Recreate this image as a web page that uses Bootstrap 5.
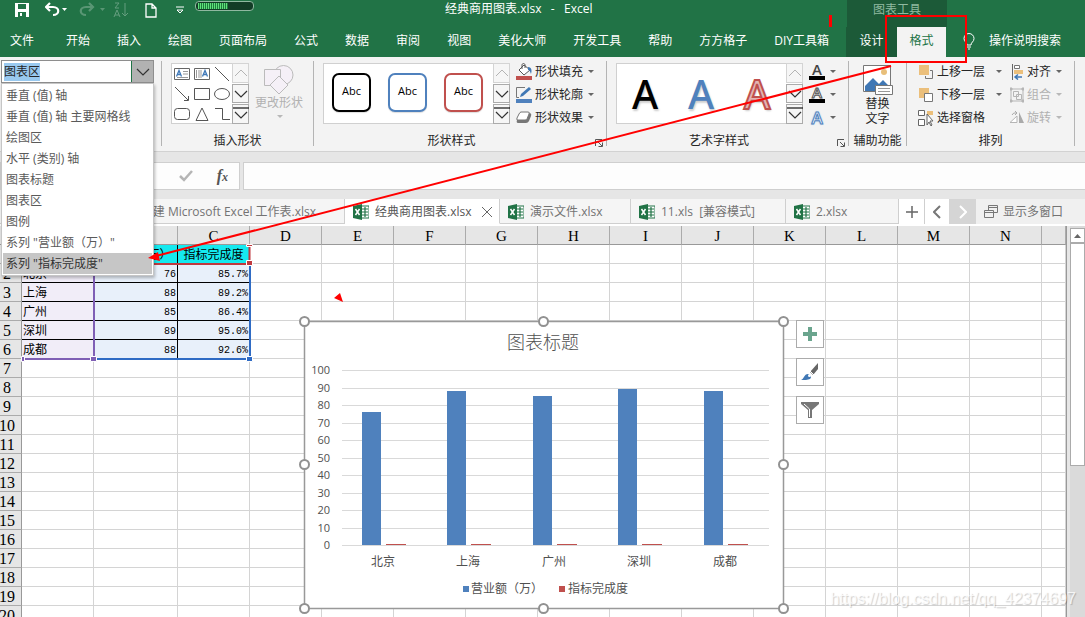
<!DOCTYPE html>
<html lang="zh-CN">
<head>
<meta charset="utf-8">
<meta name="viewport" content="width=device-width, initial-scale=1">
<title>经典商用图表.xlsx - Excel</title>
<link href="https://cdn.jsdelivr.net/npm/bootstrap@5.3.0/dist/css/bootstrap.min.css" rel="stylesheet">
<style>
body{font:12px/16px "Open Sans","Noto Sans CJK SC",sans-serif;color:#262626;background:#e6e6e6}
button,input,.btn{font:inherit;color:inherit}
button{border:0;background:none;padding:0;white-space:nowrap}
svg{display:block;flex:none}
.app-shell{height:100vh}
/* header */
.app-head{background:#217346;color:#fff}
.title-row{height:27px}
.quick{flex:0 0 445px;height:20px;padding-left:15px}
.doc-title{flex:0 0 402px;height:18px;padding-top:1px}
.ctx-title{flex:0 0 100px;background:#1c5a38;color:#90b9a0;height:27px;padding-top:2px}
.meter{width:59px;height:10px;border:1px solid #8fb8a0;border-radius:4px;background:#123c26;padding:1px 2px}
.meter span{display:block;width:30px;height:6px;background:repeating-linear-gradient(90deg,#5fe07a 0 1px,#1d7a3c 1px 2px)}
.tab-row{height:30px;padding-left:10px}
.tab-row button{height:30px;padding-bottom:2px}
.main-tabs{gap:27px}
.file-tab{margin-right:5px}
.ctx-tabs{margin-left:17px;width:100px;background:#1c5a38}
.ctx-tabs button{flex:1 1 0}
.ctx-tabs .current{flex:0 0 49px;background:#f3f3f3;color:#217346}
.tell{gap:14px;margin-left:17px}
/* ribbon */
.ribbon{background:#f3f3f3;height:95px;padding:4px 0 5px;border-bottom:1px solid #d2d2d2}
.rgroup{border-right:1px solid #b4b4b4;position:relative;flex:none}
.rbody{height:69px}
.rlabel{height:17px;line-height:17px;text-align:center;padding-top:2px}
.launcher{position:absolute;right:3px;bottom:-1px}
.g-elements{width:162px}.g-insert{width:152px;padding-left:9px}.g-styles{width:293px;padding-left:9px}.g-art{width:242px;padding-left:9px}.g-alt{width:58px}.g-arrange{width:168px;padding-left:11px}
.g-insert .rlabel,.g-styles .rlabel,.g-art .rlabel{margin-left:-9px}
.g-styles .rlabel,.g-art .rlabel{padding-right:17px}
.g-arrange .rlabel{margin-left:-11px}
.combo{margin-left:1px;width:153px;height:23px;border:1px solid #8e8e8e;background:#fff;margin-top:-1px}
.combo input{width:130px;border:0;border-right:1px solid #217346;padding:0 2px;outline:0;background:linear-gradient(#99c9ef,#99c9ef) 2px center/36px 18px no-repeat #fff}
.combo button{flex:1;background:#b2b2b2}
.combo svg{margin:auto}
.pick{position:absolute;left:1px;top:22px;width:153px;z-index:20;background:#fff;border:1px solid #c6c6c6;padding:1px;box-shadow:1px 2px 3px #0004}
.pick button{display:block;width:100%;height:21px;text-align:left;padding-left:3px;color:#5a5a5a}
.pick .chosen{background:#c6c6c6;color:#333}
.gallery{height:61px;border:1px solid #d0d0d0;background:#fff;margin-top:2px}
.shape-grid{display:grid;grid-template-columns:repeat(3,20px);grid-template-rows:repeat(3,20px);width:61px}
.shape-grid button{display:grid;place-items:center}
.gscroll{width:17px;margin:-1px}
.gscroll button{flex:1;border:1px solid #ababab;background:#f6f6f6;display:grid;place-items:center;margin-bottom:1px}
.gscroll button:first-child{border-color:#d4d4d4}
.gscroll button:last-child{margin-bottom:0}
.abc-list{width:170px;gap:17px;padding:9px 8px}
.abc-list button{width:39px;height:39px;border:2px solid #000;border-radius:7px;font-size:11px;color:#000;background:#fff;padding-bottom:3px;box-shadow:0 1px 1px #0002}
.abc-list .blue{border-color:#4f81bd}.abc-list .red{border-color:#c0504d}
.art-list{width:170px;padding-right:2px}
.art-list button{flex:1;font:500 40px/58px "Noto Sans","Open Sans",sans-serif;color:#000;text-shadow:1px 2px 2px #0003}
.art-list .blue{color:#4f81bd}
.art-list .red{color:#e3b4b3;-webkit-text-stroke:2px #c0504d}
.stack button{height:23px;display:flex;align-items:center;gap:3px}
.stack{margin-top:-1px}
.beside{margin-left:6px}
.caret{width:0;height:0;border:3px solid transparent;border-top-color:#666;border-bottom:0;margin-left:2px}
.off{color:#b1b1b1}.off .caret{border-top-color:#b8b8b8}
.gly{width:16px;height:17px;border-bottom:4px solid #000;line-height:13px;font-weight:600;font-size:15px;text-align:center;color:#444}
.gly.hollow{color:#fff;-webkit-text-stroke:1px #555}
.gly.glow{border-color:transparent;color:#fff;font-size:17px;line-height:17px;-webkit-text-stroke:1px #4f81bd;text-shadow:0 0 2px #4f9be0}
/* formula row */
.formula{padding:10px 0 9px;gap:3px}
.fx-tools{width:240px;height:28px;background:#fdfdfd;border:1px solid #cfcfcf;padding:0 11px 0 178px}
.fx-mark{font:italic 700 12px/18px "Liberation Serif",serif;color:#555}
.fx-mark span{font-size:16px}
.fx-input{height:28px;background:#fdfdfd;border:1px solid #cfcfcf;border-right:0;min-width:0;padding:0 6px}
/* workbook tabs */
.books{height:27px;border-bottom:2px solid #fff;color:#737373;background:#f0f0f0;flex:none}
.book{border-right:1px solid #cfcfcf;border-bottom:1px solid #cfcfcf;background:#f5f5f5;display:flex;align-items:center;gap:6px;padding-left:8px;padding-top:1px;flex:none}
.book.current{background:#fff;border-bottom-color:#fff;color:#555}
.tool{border-right:1px solid #cfcfcf;background:#fff;display:grid;place-items:center;flex:none}
/* sheet */
.sheet{position:relative;overflow:hidden;background:#fff;border-right:1px solid #999;min-width:0}
.cells{table-layout:fixed;border-collapse:separate;border-spacing:0;width:100%;font:12px/14px "Liberation Mono","Noto Sans CJK SC",monospace;color:#000}
.cells th,.cells td{height:19px;padding:3px 1px 0;border-right:1px solid #d4d4d4;border-bottom:1px solid #d4d4d4;white-space:nowrap;overflow:hidden}
.cells th{background:#e6e6e6;border-color:#ababab;font:16px/16px "Liberation Serif",serif;text-align:center;padding:2px 0 0}
.cells thead th{border-bottom-color:#999;font-size:15px}
.cells tbody th{padding-right:7px;border-right-color:#999}
.cells tbody th span{display:block;margin:0 -4px}
.cells .cap{background:#15e9ef;border-color:#000;text-align:center;padding-top:3px}
.cells .city{background:#f1edf8;border-bottom-color:#000}
.cells .num{background:#e8f0fa;border-right-color:#000;border-bottom-color:#000;text-align:right;font-size:10px}
.range-mark{position:absolute;left:20px;top:17px;pointer-events:none}
.chart-box{position:absolute;left:296px;top:87px}
.chart-box text{font:12px "Open Sans","Noto Sans CJK SC",sans-serif;fill:#505050}
.chart-box .axis{font-size:11px;text-anchor:end}
.chart-box .cat{text-anchor:middle}
.chart-box .ctitle{font-size:18px;text-anchor:middle;font-weight:300}
.chart-side{position:absolute;left:796px;top:94px;gap:10px}
.chart-side button{width:28px;height:28px;border:1px solid #ababab;background:#fff;display:grid;place-items:center}
.vbar{width:15px;margin-left:3px;background:#dadada;flex:none}
.vbar button{height:15px;margin-top:2px;background:#fff;border:1px solid #ababab;display:grid;place-items:center;width:100%}
.vthumb{height:223px;background:#fff;border:1px solid #ababab}
.water{position:absolute;right:9px;bottom:8px;font:16px/20px "Liberation Sans",sans-serif;color:#fffc;text-shadow:1px 1px 1px #0003;z-index:30}
.markup{position:absolute;left:0;top:0;z-index:40;pointer-events:none}
</style>
</head>
<body>
<svg width="0" height="0" class="position-absolute" aria-hidden="true">
<symbol id="up" viewBox="0 0 14 8"><path d="M1 7l6-6 6 6" fill="none" stroke="#b4b4b4"/></symbol>
<symbol id="dn" viewBox="0 0 14 8"><path d="M1 1l6 6 6-6" fill="none" stroke="#333" stroke-width="1.2"/></symbol>
<symbol id="more" viewBox="0 0 16 14"><path d="M0 1h16" stroke="#222" stroke-width="1.3"/><path d="M2 5l6 6 6-6" fill="none" stroke="#333" stroke-width="1.2"/></symbol>
<symbol id="xl" viewBox="0 0 16 16"><path d="M8 2h8v12H8z" fill="#fff" stroke="#217346"/><path d="M9 5h6M9 8h6M9 11h6M12 3v10" stroke="#217346" stroke-width="1.2"/><path d="M0 2l9-2v16l-9-2z" fill="#217346"/><path d="M2.500 5l4 6M6.500 5l-4 6" stroke="#fff" stroke-width="1.500"/></symbol>
<symbol id="launch" viewBox="0 0 8 8"><path d="M.5 7V.5H7M3 3l4 4M7.500 3.500v4h-4" fill="none" stroke="#555"/></symbol>
</svg>
<div class="app-shell d-flex flex-column overflow-hidden position-relative">
<header class="app-head flex-shrink-0">
 <div class="title-row d-flex">
  <div class="quick d-flex align-items-center">
   <button aria-label="保存"><svg width="14" height="14"><path d="M0 0h14v14H0z" fill="#fff"/><path d="M3 1h8v5H3zM3 9h8v5H3z" fill="#217346"/><path d="M5 10h2v3H5z" fill="#fff"/></svg></button>
   <button class="ms-3" aria-label="撤消"><svg width="22" height="16"><path d="M5 1L1 5l4 4M1 5h7c7 0 7 8 0 8" fill="none" stroke="#fff" stroke-width="2.200"/><path d="M17 6h5l-2.500 3z" fill="#fff"/></svg></button>
   <button class="ms-2" aria-label="恢复"><svg width="30" height="16"><g opacity=".25"><path d="M14 1l4 4-4 4M18 5h-7c-7 0-7 8 0 8" fill="none" stroke="#fff" stroke-width="2.200"/><path d="M25 6h5l-2.500 3z" fill="#fff"/></g></svg></button>
   <button class="ms-2" aria-label="降序"><svg width="16" height="16" opacity=".3" fill="none" stroke="#fff"><path d="M2 1h4l-4 5h4M1 15l3-7 3 7M2 13h4M12 1v13M9 11l3 3 3-3"/></svg></button>
   <button class="ms-3" aria-label="新建"><svg width="12" height="15"><path d="M1 1h6l4 4v9H1zM7 1v4h4" fill="none" stroke="#fff" stroke-width="1.300"/></svg></button>
   <button class="ms-3" aria-label="自定义快速访问工具栏"><svg width="14" height="8"><path d="M3 1h8M4 4l3 3 3-3z" fill="none" stroke="#fff"/></svg></button>
   <div class="meter ms-2 mb-2"><span></span></div>
  </div>
  <div class="doc-title">经典商用图表.xlsx&nbsp;&nbsp; - &nbsp;&nbsp;Excel</div>
  <div class="ctx-title text-center">图表工具</div>
 </div>
 <nav class="tab-row d-flex text-nowrap">
  <div class="main-tabs d-flex">
   <button class="file-tab">文件</button><button>开始</button><button>插入</button><button>绘图</button><button>页面布局</button><button>公式</button><button>数据</button><button>审阅</button><button>视图</button><button>美化大师</button><button>开发工具</button><button>帮助</button><button>方方格子</button><button>DIY工具箱</button>
  </div>
  <div class="ctx-tabs d-flex"><button>设计</button><button class="current">格式</button></div>
  <button class="tell d-flex align-items-center"><svg width="12" height="17" fill="none" stroke="#fff"><path d="M4 12c0-3-3-3-3-6.500a5 5 0 0 1 10 0C11 9 8 9 8 12zM4 14h4M5 16h2"/></svg><span>操作说明搜索</span></button>
 </nav>
</header>

<section class="ribbon d-flex flex-shrink-0">
 <div class="rgroup g-elements">
  <div class="combo d-flex"><input id="element" aria-label="图表元素" value="图表区"><button aria-label="展开"><svg width="14" height="8"><use href="#dn"/></svg></button></div>
  <div class="pick"><button>垂直 (值) 轴</button><button>垂直 (值) 轴 主要网格线</button><button>绘图区</button><button>水平 (类别) 轴</button><button>图表标题</button><button>图表区</button><button>图例</button><button>系列 "营业额（万）"</button><button class="chosen">系列 "指标完成度"</button></div>
 </div>
 <div class="rgroup g-insert">
  <div class="rbody d-flex">
   <div class="gallery d-flex">
    <div class="shape-grid">
     <button aria-label="文本框"><svg width="16" height="14"><path d="M.5 1.500h15v11H.5z" fill="none" stroke="#666"/><path d="M2.500 9.500L5 3.500l2.500 6M3.500 7.500h3" fill="none" stroke="#3f78b8" stroke-width="1.300"/><path d="M9 4.500h5M9 7h5M3 10.500h11" stroke="#999"/></svg></button>
     <button aria-label="竖排文本框"><svg width="16" height="14"><path d="M.5 1.500h15v11H.5z" fill="none" stroke="#666"/><path d="M8.500 9.500l2.500-6 2.500 6M9.500 7.500h3" fill="none" stroke="#3f78b8" stroke-width="1.300"/><path d="M2.500 3v8M5 3v8M7 3v8" stroke="#999"/></svg></button>
     <button aria-label="直线"><svg width="16" height="16"><path d="M1 1l14 14" stroke="#555"/></svg></button>
     <button aria-label="箭头"><svg width="16" height="16"><path d="M1 1l13 13M14.500 10v4.500H10" stroke="#555" fill="none"/></svg></button>
     <button aria-label="矩形"><svg width="16" height="12"><path d="M.5.5h15v11H.5z" fill="none" stroke="#555"/></svg></button>
     <button aria-label="椭圆"><svg width="16" height="12"><ellipse cx="8" cy="6" rx="7.500" ry="5.500" fill="none" stroke="#555"/></svg></button>
     <button aria-label="圆角矩形"><svg width="16" height="12"><rect x=".5" y=".5" width="15" height="11" rx="3" fill="none" stroke="#555"/></svg></button>
     <button aria-label="三角形"><svg width="14" height="14"><path d="M7 1L1 13.500h12z" fill="none" stroke="#555"/></svg></button>
     <button aria-label="肘形连接符"><svg width="16" height="14"><path d="M1 1.500h7.500v11H16" fill="none" stroke="#555"/></svg></button>
    </div>
    <div class="gscroll d-flex flex-column"><button aria-label="上"><svg width="14" height="8"><use href="#up"/></svg></button><button aria-label="下"><svg width="14" height="8"><use href="#dn"/></svg></button><button aria-label="更多"><svg width="16" height="14"><use href="#more"/></svg></button></div>
   </div>
   <button class="off beside d-flex flex-column align-items-center"><svg class="mt-1" width="30" height="30" fill="#f5f0f7" stroke="#bbb"><circle cx="19.500" cy="10" r="9.500"/><path d="M.5 4.500h16v16H.5z"/><path d="M15 11l9 9-9 9-9-9z"/></svg><span>更改形状</span><i class="caret mt-1"></i></button>
  </div>
  <div class="rlabel">插入形状</div>
 </div>
 <div class="rgroup g-styles">
  <div class="rbody d-flex">
   <div class="gallery d-flex"><div class="abc-list d-flex"><button>Abc</button><button class="blue">Abc</button><button class="red">Abc</button></div>
    <div class="gscroll d-flex flex-column"><button aria-label="上"><svg width="14" height="8"><use href="#up"/></svg></button><button aria-label="下"><svg width="14" height="8"><use href="#dn"/></svg></button><button aria-label="更多"><svg width="16" height="14"><use href="#more"/></svg></button></div></div>
   <div class="stack beside">
    <button><svg width="16" height="17"><path d="M8 2l6 5-6 5-5-5z" fill="#fff" stroke="#555"/><path d="M6 6V2c0-2 3-2 3 0v3" fill="none" stroke="#555"/><path d="M12 4c4 0 4 4 3 7-1-2-1-4-3-4z" fill="#4078b5"/><path d="M0 13h16v4H0z" fill="#c0504d"/></svg>形状填充<i class="caret"></i></button>
    <button><svg width="16" height="17"><path d="M9 1.500H.5v10H3" fill="none" stroke="#777"/><path d="M4 11l1-3 8-7 2 2-8 7z" fill="#4078b5"/><path d="M0 13h16v4H0z" fill="#4f81bd"/></svg>形状轮廓<i class="caret"></i></button>
    <button><svg width="16" height="17"><path d="M5 4h8q3 0 2 3l-2 5q-1 2-3 2H2q-2 0-1-3z" fill="#777"/><path d="M5 3h7q2 0 1 2l-2 5q0 1-2 1H2q-2 0-1-2l2-4q1-2 2-2z" fill="#fff" stroke="#777"/></svg>形状效果<i class="caret"></i></button>
   </div>
  </div>
  <div class="rlabel">形状样式</div><svg class="launcher" width="8" height="8"><use href="#launch"/></svg>
 </div>
 <div class="rgroup g-art">
  <div class="rbody d-flex">
   <div class="gallery d-flex"><div class="art-list d-flex"><button>A</button><button class="blue">A</button><button class="red">A</button></div>
    <div class="gscroll d-flex flex-column"><button aria-label="上"><svg width="14" height="8"><use href="#up"/></svg></button><button aria-label="下"><svg width="14" height="8"><use href="#dn"/></svg></button><button aria-label="更多"><svg width="16" height="14"><use href="#more"/></svg></button></div></div>
   <div class="stack beside">
    <button aria-label="文本填充"><span class="gly">A</span><i class="caret"></i></button>
    <button aria-label="文本轮廓"><span class="gly hollow">A</span><i class="caret"></i></button>
    <button aria-label="文本效果"><span class="gly glow">A</span><i class="caret"></i></button>
   </div>
  </div>
  <div class="rlabel">艺术字样式</div><svg class="launcher" width="8" height="8"><use href="#launch"/></svg>
 </div>
 <div class="rgroup g-alt">
  <div class="rbody d-flex justify-content-center">
   <button class="d-flex flex-column align-items-center lh-sm"><svg class="mt-1" width="30" height="31"><path d="M.5.5h27v26H.5z" fill="#fff" stroke="#777"/><circle cx="21" cy="7" r="3" fill="#e8bf7a"/><path d="M2 26v-5l8-8 6 6 4-4 6 6v5z" fill="#4078b5"/><path d="M12.500 20.500h17v9h-17z" fill="#fff" stroke="#777"/><path d="M15 23.500h12M15 26.500h12" stroke="#999"/></svg><span>替换<br>文字</span></button>
  </div>
  <div class="rlabel">辅助功能</div>
 </div>
 <div class="rgroup g-arrange">
  <div class="rbody d-flex">
   <div class="stack">
    <button><svg width="16" height="16"><path d="M1 1h10v10H1z" fill="#ebbf7b"/><path d="M12 6.500h2.500v8h-7V12" fill="none" stroke="#777"/></svg>上移一层<i class="caret ms-2"></i></button>
    <button><svg width="16" height="16"><path d="M1 1h10v10H1z" fill="#ebbf7b"/><path d="M6.500 6.500h8v8h-8z" fill="#fff" stroke="#777"/></svg>下移一层<i class="caret ms-2"></i></button>
    <button><svg width="16" height="16"><path d="M.5.5h6v5h-6zM.5 9.500h6v6h-6z" fill="#fff" stroke="#666"/><path d="M9 1h6v4H9z" fill="#ebbf7b"/><path d="M9 4v11l2-3 2 4 1-1-2-4h3z" fill="#fff" stroke="#666"/></svg>选择窗格</button>
   </div>
   <div class="stack ms-2">
    <button><svg width="14" height="16"><path d="M2.500 0v16" stroke="#666"/><path d="M4.500 1.500h5v3h-5z" fill="#fff" stroke="#777"/><path d="M4 6h9v4H4z" fill="#ebbf7b"/><path d="M12 13H5M8 10.500L5 13l3 2.500" fill="none" stroke="#4078b5" stroke-width="1.500"/></svg>对齐<i class="caret"></i></button>
    <button class="off"><svg width="14" height="16" fill="none" stroke="#b5b5b5"><path d="M1 2h12v12H1z"/><path d="M3.500 4.500h5v5h-5zM6.500 7.500h5v5h-5z"/><path d="M0 1h2v2H0zM12 1h2v2h-2zM0 13h2v2H0zM12 13h2v2h-2z" fill="#b5b5b5"/></svg>组合<i class="caret"></i></button>
    <button class="off"><svg width="14" height="16"><path d="M0 12.500h7V6z" fill="#fff" stroke="#b5b5b5"/><path d="M9 2l5 11H9z" fill="#aaa"/><path d="M2 5q1-3 5-2M5 1l2 2-2 2" fill="none" stroke="#aaa"/></svg>旋转<i class="caret"></i></button>
   </div>
  </div>
  <div class="rlabel">排列</div>
 </div>
</section>

<section class="formula d-flex flex-shrink-0">
 <div class="fx-tools d-flex align-items-center justify-content-between"><button aria-label="输入"><svg width="14" height="12"><path d="M1 6l4 4 8-9" fill="none" stroke="#b5b5b5" stroke-width="2.500"/></svg></button><button class="fx-mark"><span>f</span>x</button></div>
 <input class="fx-input flex-fill" aria-label="编辑栏">
</section>

<nav class="books d-flex text-nowrap">
 <button class="book ps-0" style="width:345px"><span class="ms-auto pe-4 me-1">新建 Microsoft Excel 工作表.xlsx</span></button>
 <button class="book current" style="width:155px"><svg width="16" height="16"><use href="#xl"/></svg>经典商用图表.xlsx<svg class="ms-1" width="12" height="12"><path d="M1 1l10 10M11 1L1 11" stroke="#666"/></svg></button>
 <button class="book" style="width:131px"><svg width="16" height="16"><use href="#xl"/></svg>演示文件.xlsx</button>
 <button class="book" style="width:155px"><svg width="16" height="16"><use href="#xl"/></svg>11.xls&nbsp; [兼容模式]</button>
 <button class="book" style="width:113px"><svg width="16" height="16"><use href="#xl"/></svg>2.xlsx</button>
 <button class="tool" style="width:26px" aria-label="新建"><svg width="12" height="12"><path d="M6 0v12M0 6h12" stroke="#666" stroke-width="1.500"/></svg></button>
 <button class="tool border-0" style="width:24px" aria-label="上一个"><svg width="8" height="14"><path d="M7 1L1 7l6 6" fill="none" stroke="#777" stroke-width="2"/></svg></button>
 <button class="tool border-0" style="width:27px;background:#d5d5d5" aria-label="下一个"><svg width="8" height="14"><path d="M1 1l6 6-6 6" fill="none" stroke="#fff" stroke-width="2"/></svg></button>
 <button class="d-flex align-items-center gap-1 ps-2"><svg width="15" height="14" fill="#f0f0f0" stroke="#777"><path d="M4.500.5h9v7h-9zM4 2.500h10"/><path d="M.5 5.500h9v7h-9zM0 7.500h10"/></svg>显示多窗口</button>
</nav>

<main class="d-flex flex-fill overflow-hidden" style="min-height:0">
 <div class="sheet flex-fill">
  <table class="cells"><colgroup id="widths"></colgroup><thead><tr id="letters"></tr></thead><tbody id="rows"></tbody></table>
  <svg class="range-mark" width="234" height="122">
   <path d="M2 21h228M229.500 3v16" stroke="#c0393f" stroke-width="2"/>
   <path d="M74 23v93M2 116h71" stroke="#7f5fb5" stroke-width="2"/>
   <path d="M74 116h156V22" fill="none" stroke="#2f6bc4" stroke-width="2"/>
   <path d="M226.500 17.500h6v5h-6zM226.500 1.500h6v2h-6z" fill="#c0393f" stroke="#fff"/>
   <path d="M70.500 113.500h6v5h-6zM1.500 113.500h3v5h-3z" fill="#7f5fb5" stroke="#fff"/>
   <path d="M226.500 113.500h6v5h-6z" fill="#2f6bc4" stroke="#fff"/>
  </svg>
  <svg class="chart-box" id="chart" width="496" height="304" role="img" aria-label="图表标题"></svg>
  <div class="chart-side d-flex flex-column">
   <button aria-label="图表元素"><svg width="14" height="14"><path d="M7 0v14M0 7h14" stroke="#6ba58e" stroke-width="4"/></svg></button>
   <button aria-label="图表样式"><svg width="18" height="18"><path d="M9 9l8-9v6l-5 6z" fill="#666"/><path d="M9 8l4 4" stroke="#fff"/><path d="M0 17c3-1 3-6 7-6 3 0 4 3 2 5-2 1-6 1-9 1z" fill="#4078b5"/><circle cx="8.500" cy="12.500" r="1.500" fill="#fff"/></svg></button>
   <button aria-label="图表筛选器"><svg width="18" height="16"><path d="M0 0h18v2l-7 6v8H7V8L0 2z" fill="#777"/><path d="M3 2l5.500 5v8" fill="none" stroke="#fff"/></svg></button>
  </div>
 </div>
 <div class="vbar"><button aria-label="向上滚动"><svg width="7" height="4"><path d="M0 4l3.500-4L7 4z" fill="#666"/></svg></button><div class="vthumb"></div></div>
</main>
<div class="water">https://blog.csdn.net/qq_42374697</div>
<svg class="markup" width="1085" height="617" fill="none" stroke="#f00" stroke-width="2"><path d="M886 16h80v46h-80z"/><path d="M830.500 15v12" stroke-width="3"/><path d="M891 66L156 256"/><path d="M148 258l10-6 2 9zM334 298l6-5 3 9z" fill="#f00" stroke="none"/></svg>
</div>
<script src="https://cdn.jsdelivr.net/npm/bootstrap@5.3.0/dist/js/bootstrap.bundle.min.js"></script>
<script>
const data=[["北京",76,"85.7%"],["上海",88,"89.2%"],["广州",85,"86.4%"],["深圳",89,"95.0%"],["成都",88,"92.6%"]];
/* the open list covers the first two column letters and the first row number */
const letters=["","",..."CDEFGHIJKLMN",""];
const $=id=>document.getElementById(id);
$("widths").innerHTML='<col style="width:22px">'+letters.map((l,i)=>i===letters.length-1?"<col>":`<col style="width:${i===1?84:72}px">`).join("");
$("letters").innerHTML="<th></th>"+letters.map(l=>`<th>${l}</th>`).join("");
let html="";
for(let r=1;r<=20;r++){
  const d=r===1?["","营业额（万）","指标完成度"]:data[r-2];
  html+=`<tr><th><span>${r===1?"":r}</span></th>`+letters.map((l,i)=>{
    if(!d||i>2)return"<td></td>";
    return`<td class="${r===1?"cap":i?"num":"city"}">${d[i]}</td>`;
  }).join("")+"</tr>";
}
$("rows").innerHTML=html;
/* column chart */
let s='<path d="M8.500 8.500h479v287h-479z" fill="#fff" stroke="#999" stroke-width="1.500"/><text class="ctitle" x="247" y="36">图表标题</text>';
for(let v=0;v<=100;v+=10){
  const y=Math.round(232-v*1.75)+.5;
  s+=`<path d="M46 ${y}h427" stroke="#d9d9d9"/><text class="axis" x="34" y="${y+3}">${v}</text>`;
}
data.forEach((d,i)=>{
  const x=Math.round(66+i*85.4),h=Math.round(d[1]*1.75);
  s+=`<path d="M${x} 232v-${h}h19v${h}z" fill="#4f81bd"/><path d="M${x+24} 231.500h20" stroke="#c0504d"/><text class="cat" x="${x+21}" y="253">${d[0]}</text>`;
});
s+='<path d="M167 273h6v6h-6z" fill="#4f81bd"/><text x="175" y="280">营业额（万）</text><path d="M263 273h6v6h-6z" fill="#c0504d"/><text x="272" y="280">指标完成度</text>';
[[8,8],[247,8],[487,8],[8,151],[487,151],[8,295],[487,295],[247,295]].forEach(p=>s+=`<circle cx="${p[0]+.5}" cy="${p[1]+.5}" r="4.500" fill="#fff" stroke="#919191" stroke-width="2"/>`);
$("chart").innerHTML=s;
</script>
</body>
</html>
